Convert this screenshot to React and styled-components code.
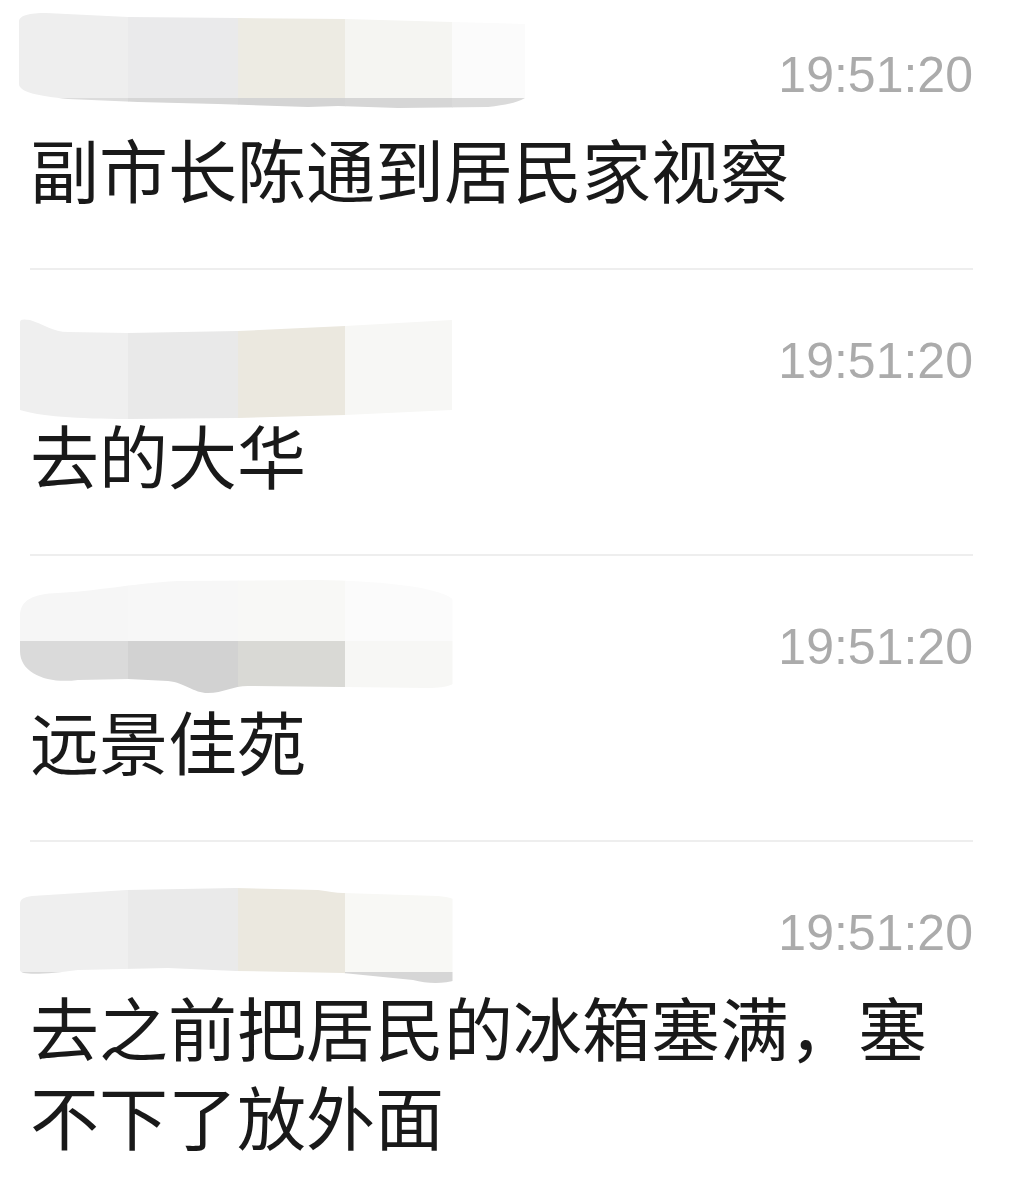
import React from "react";
import styled, { createGlobalStyle } from "styled-components";

// чистая белая страница, без полосы прокрутки (последнее сообщение обрезано снизу)
const GlobalStyle = createGlobalStyle`
  html, body {
    margin: 0;
    padding: 0;
    background: #ffffff;
    overflow: hidden;
  }
`;

// список сообщений, прокручен так, что верх первого пункта срезан
const List = styled.div`
  width: 1024px;
  box-sizing: border-box;
  padding: 0 51px 0 30px;
  margin-top: -16px;
`;

// один пункт: шапка (имя + время), текст, разделитель
const Item = styled.div`
  padding-bottom: 55px;
  border-bottom: 2px solid ${(p) => (p.$last ? "transparent" : "#eeeeee")};
`;

const Header = styled.div`
  height: 118px;
  display: flex;
  justify-content: space-between;
  align-items: flex-end;
`;

// мозаика, которой закрыто имя отправителя
const Mosaic = styled.svg`
  align-self: flex-start;
  flex-shrink: 0;
  width: 520px;
  height: 150px;
  margin-left: -12px;
  display: block;
`;

const Time = styled.span`
  font-family: "Liberation Sans", Arial, sans-serif;
  font-size: 50px;
  line-height: 50px;
  color: #ababab;
  margin-bottom: 2px;
`;

const Text = styled.div`
  margin-top: 22px;
  font-family: "Noto Sans CJK SC", "Noto Sans", sans-serif;
  font-size: 69px;
  line-height: 89px;
  color: #191919;
`;

const COLS = [1, 110, 220, 327, 434, 520];

const Redaction = ({ id, shape, split, top, bottom }) => (
  <Mosaic viewBox="0 0 520 150">
    <defs>
      <clipPath id={id}>
        <path d={shape} />
      </clipPath>
    </defs>
    <g clipPath={`url(#${id})`}>
      {top.map((c, i) => (
        <rect key={"t" + i} x={COLS[i]} y={0} width={COLS[i + 1] - COLS[i] + 0.5} height={split} fill={c} />
      ))}
      {bottom.map((c, i) => (
        <rect key={"b" + i} x={COLS[i]} y={split} width={COLS[i + 1] - COLS[i] + 0.5} height={150 - split} fill={c} />
      ))}
    </g>
  </Mosaic>
);

const messages = [
  {
    id: "m1",
    text: "副市长陈通到居民家视察",
    blob: {
      shape:
        "M1,38 C1,31 12,29 28,29 L110,33 L220,34 L327,35 L434,38 L507,40 L507,114 C500,118 490,121 470,123 L380,124 L320,122 L290,123 L200,120 L120,118 L50,115 C20,112 1,108 1,100 Z",
      split: 114,
      top: ["#eeeeee", "#eaeaeb", "#edebe3", "#f5f5f2", "#fbfbfb"],
      bottom: ["#dcdcdc", "#d6d6d6", "#d4d4d4", "#d6d6d6", "#dadada"],
    },
  },
  {
    id: "m2",
    text: "去的大华",
    blob: {
      shape:
        "M2,52 C2,49 6,49 12,50 C25,54 35,62 50,62 L110,63 L220,61 L327,56 L434,50 L434,140 L327,145 L220,148 L110,149 C60,149 20,146 2,140 Z",
      split: 150,
      top: ["#efefef", "#e9e9e9", "#ebe8df", "#f7f7f5"],
      bottom: [],
    },
  },
  {
    id: "m3",
    text: "远景佳苑",
    blob: {
      shape:
        "M2,60 C2,44 15,38 40,37 C80,35 110,28 160,25 L300,24 C360,25 410,30 430,40 C440,46 442,52 442,60 L442,118 C442,128 430,132 410,132 L325,131 L230,130 C215,130 205,137 190,137 C175,137 168,127 150,125 L110,123 L60,124 C30,128 2,118 2,95 Z",
      split: 85,
      top: ["#f6f6f6", "#f7f7f7", "#f8f8f6", "#fbfbfb"],
      bottom: ["#dadada", "#d2d2d2", "#d9d9d5", "#f7f7f5"],
    },
  },
  {
    id: "m4",
    text: "去之前把居民的冰箱塞满，塞不下了放外面",
    blob: {
      shape:
        "M2,62 C2,57 6,55 14,54 L109,48 L218,46 L300,48 C310,49 318,51 325,51 L420,54 C432,55 439,57 439,62 L439,138 C425,142 410,142 395,138 L325,131 L218,129 L150,126 L60,128 C30,132 2,134 2,128 Z",
      split: 130,
      top: ["#efefef", "#eaeaea", "#ebe8df", "#f8f8f5"],
      bottom: ["#d8d8d8", "#eaeaea", "#ebe8df", "#d6d6d6"],
    },
  },
];

export default function App() {
  return (
    <>
      <GlobalStyle />
      <List>
        {messages.map((m, i) => (
          <Item key={m.id} $last={i === messages.length - 1}>
            <Header>
              <Redaction id={"clip-" + m.id} {...m.blob} />
              <Time>19:51:20</Time>
            </Header>
            <Text>{m.text}</Text>
          </Item>
        ))}
      </List>
    </>
  );
}
